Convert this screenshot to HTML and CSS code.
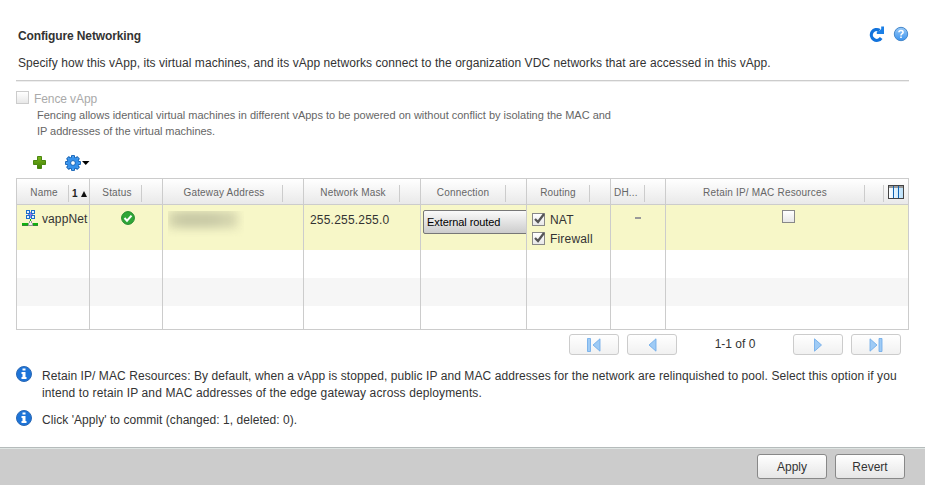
FILE: index.html
```html
<!DOCTYPE html>
<html lang="en">
<head>
<meta charset="utf-8">
<title>Configure Networking</title>
<link rel="stylesheet" href="styles.css">
</head>
<body>
<main class="page">
  <header class="title-bar">
    <h1>Configure Networking</h1>
    <div class="title-icons">
      <svg width="16" height="16" viewBox="0 0 16 16"><path d="M12.200 12A5.400 5.400 0 1 1 10.600 4.300" fill="none" stroke="#1273dc" stroke-width="3.200"/><path d="M15 .6V8H7.800V5.600L10.200 5 12.200 3V.6z" fill="#1b7fe6"/></svg>
      <svg width="16" height="16" viewBox="0 0 16 16"><defs><linearGradient id="help" x2="0" y2="1"><stop offset="0" stop-color="#9bcbf8"/><stop offset="1" stop-color="#3b93ee"/></linearGradient></defs><circle cx="8" cy="8" r="6.700" fill="url(#help)" stroke="#4587ca"/><path d="M5.900 6.300Q6 4.500 8 4.500T10.100 6.200Q10.100 7.200 8.900 7.900Q8 8.400 8 9.500M8 10.500V12" fill="none" stroke="#fff" stroke-width="1.600"/></svg>
    </div>
  </header>
  <p class="intro">Specify how this vApp, its virtual machines, and its vApp networks connect to the organization VDC networks that are accessed in this vApp.</p>
  <section class="fence">
    <div class="fence-option"><span class="box box-off"></span><span>Fence vApp</span></div>
    <p class="fence-help">Fencing allows identical virtual machines in different vApps to be powered on without conflict by isolating the MAC and<br><span class="tight">IP addresses of the virtual machines.</span></p>
  </section>
  <div class="toolbar">
    <svg class="add" width="14" height="14" viewBox="0 0 14 14"><defs><linearGradient id="add" x2="0" y2="1"><stop offset="0" stop-color="#7bb51c"/><stop offset="1" stop-color="#3f7f05"/></linearGradient></defs><path d="M4.500.5h4v4h4v4h-4v4h-4v-4h-4v-4h4z" fill="url(#add)" stroke="#4a8710" stroke-linejoin="round"/></svg>
    <svg width="25" height="16" viewBox="0 0 25 16">
      <g fill="#3d97ee" stroke="#1763b5" stroke-linejoin="round"><path d="M6.500.6h3v14.800h-3zM.6 6.500h14.800v3H.6z"/><path d="M6.500.6h3v14.800h-3zM.6 6.500h14.800v3H.6z" transform="rotate(45 8 8)"/></g>
      <circle cx="8" cy="8" r="6.300" fill="#1763b5"/>
      <g fill="#4ba2f2"><path d="M7 1.100h2v13.800H7zM1.100 7h13.800v2H1.100z"/><path d="M7 1.100h2v13.800H7zM1.100 7h13.800v2H1.100z" transform="rotate(45 8 8)"/><circle cx="8" cy="8" r="5.700" fill="#3591ec"/></g>
      <circle cx="8" cy="8" r="2.400" fill="#fff" stroke="#1763b5"/><path d="M17 6h7.500l-3.750 4z" fill="#000"/></svg>
  </div>
  <section class="table">
    <div class="row head">
      <div class="cell"><span class="label nudge">Name</span><span class="sort">1<i class="up"></i></span></div>
      <div class="cell"><span class="label nudge">Status</span><span class="grip"></span></div>
      <div class="cell"><span class="label nudge">Gateway Address</span><span class="grip"></span></div>
      <div class="cell"><span class="label nudge">Network Mask</span><span class="grip"></span></div>
      <div class="cell"><span class="label">Connection</span><span class="grip"></span></div>
      <div class="cell"><span class="label">Routing</span><span class="grip"></span></div>
      <div class="cell h-dh"><span class="label">DH...</span><span class="grip"></span></div>
      <div class="cell h-retain"><span class="label">Retain IP/ MAC Resources</span><span class="grip"></span><span class="columns"><svg width="16" height="14" viewBox="0 0 16 14" shape-rendering="crispEdges"><defs><linearGradient id="pane" x2="1"><stop offset="0" stop-color="#fff"/><stop offset="1" stop-color="#b9e0fa"/></linearGradient></defs><path d="M.5.5h15v13H.5z" fill="url(#pane)" stroke="#444"/><path d="M1 1h14v2H1z" fill="#999"/><path d="M5 1h1v12H5zM10 1h1v12h-1z" fill="#0e63b4"/></svg></span></div>
    </div>
    <div class="row selected">
      <div class="cell c-name"><svg width="16" height="16" viewBox="0 0 16 16" shape-rendering="crispEdges"><path d="M4 0h4v4H4zM9 0h4v4H9zM4 5h4v4H4zM9 5h4v4H9z" fill="#1c6fca"/><path d="M5 1h2v2H5zM10 1h2v2h-2zM5 6h2v2H5zM10 6h2v2h-2z" fill="#e4f1fd"/><path d="M8 2h1v6H8zM6 4h5v1H6z" fill="#8c7be8"/><path d="M8 9h1v2H8z" fill="#00b400"/><path d="M0 13h16v2H0z" fill="#10b010"/><path d="M0 15h16v1H0z" fill="#388438"/><path d="M7 11h3v2h1v3H6v-3h1z" fill="#999"/><path d="M8 11h1v2h1v2H7v-2h1z" fill="#eee"/></svg><span>vappNet</span></div>
      <div class="cell c-status"><svg width="14" height="14" viewBox="0 0 14 14"><circle cx="7" cy="7" r="6.400" fill="#2fa638" stroke="#218a2c"/><path d="M3.500 7l2.500 2.700L10.500 4.700" fill="none" stroke="#fff" stroke-width="2"/></svg></div>
      <div class="cell c-gateway"><div class="mask"><span class="smudge"></span></div></div>
      <div class="cell c-mask">255.255.255.0</div>
      <div class="cell c-conn"><div class="combo">External routed</div></div>
      <div class="cell c-routing">
        <div class="check"><span class="box"><svg width="14" height="13" viewBox="0 0 14 13"><path d="M3 6l3 3 6-8" fill="none" stroke="#555" stroke-width="2.300"/></svg></span><span>NAT</span></div>
        <div class="check"><span class="box"><svg width="14" height="13" viewBox="0 0 14 13"><path d="M3 6l3 3 6-8" fill="none" stroke="#555" stroke-width="2.300"/></svg></span><span>Firewall</span></div>
      </div>
      <div class="cell c-dhcp"><span class="dash"></span></div>
      <div class="cell c-retain"><span class="box"></span></div>
    </div>
    <div class="row blank"><i class="cell"></i><i class="cell"></i><i class="cell"></i><i class="cell"></i><i class="cell"></i><i class="cell"></i><i class="cell"></i><i class="cell"></i></div>
    <div class="row blank alt"><i class="cell"></i><i class="cell"></i><i class="cell"></i><i class="cell"></i><i class="cell"></i><i class="cell"></i><i class="cell"></i><i class="cell"></i></div>
    <div class="row last"><i class="cell"></i><i class="cell"></i><i class="cell"></i><i class="cell"></i><i class="cell"></i><i class="cell"></i><i class="cell"></i><i class="cell"></i></div>
  </section>
  <nav class="pager">
    <button class="page-btn"><svg width="14" height="14" viewBox="0 0 14 14"><path d="M.5.5h3v13h-3zM13 .8v12.400L6 7z"/></svg></button>
    <button class="page-btn"><svg width="14" height="14" viewBox="0 0 14 14"><path d="M11 .8v12.400L4 7z"/></svg></button>
    <span class="count">1-1 of 0</span>
    <button class="page-btn"><svg width="14" height="14" viewBox="0 0 14 14"><path d="M3.500.8v12.400L10.500 7z"/></svg></button>
    <button class="page-btn"><svg width="14" height="14" viewBox="0 0 14 14"><path d="M1 .8v12.400L8 7zM10 .5h3v13h-3z"/></svg></button>
  </nav>
  <section class="notes">
    <div class="note"><svg width="16" height="16" viewBox="0 0 16 16"><circle cx="8" cy="8" r="7.500" fill="#1d74d8" stroke="#2b68b4"/><path d="M6.500 2.500h3v2h-3zM5.500 6h4v5h1v2h-5v-2h1V8h-1z" fill="#fff"/></svg><p><span class="wide">Retain IP/ MAC Resources: By default, when a vApp is stopped, public IP and MAC addresses for the network are relinquished to pool. Select this option if you</span><br><span class="wider">intend to retain IP and MAC addresses of the edge gateway across deployments.</span></p></div>
    <div class="note"><svg width="16" height="16" viewBox="0 0 16 16"><circle cx="8" cy="8" r="7.500" fill="#1d74d8" stroke="#2b68b4"/><path d="M6.500 2.500h3v2h-3zM5.500 6h4v5h1v2h-5v-2h1V8h-1z" fill="#fff"/></svg><p><span>Click 'Apply' to commit (changed: 1, deleted: 0).</span></p></div>
  </section>
</main>
<footer class="actions"><button>Apply</button><button>Revert</button></footer>
</body>
</html>
```
FILE: styles.css
```css
* { box-sizing: border-box; }
body {
  margin: 0;
  width: 925px;
  height: 485px;
  display: flex;
  flex-direction: column;
  background: #fff;
  color: #333;
  font: 12px/17px "Liberation Sans", Arial, sans-serif;
}
h1, p { margin: 0; }
svg { display: block; flex: none; }
.page { height: 447px; padding: 26px 16px 0; flex: none; }
.title-bar { display: flex; justify-content: space-between; height: 26px; padding-left: 2px; }
h1 { font-size: 12px; line-height: 21px; letter-spacing: -.12px; }
.title-icons { display: flex; gap: 8px; }
.intro { height: 29px; padding: 3px 0 0 2px; border-bottom: 1px solid #ccc; box-shadow: 0 1px #eee; white-space: nowrap; letter-spacing: .06px; }
.fence { padding-top: 9px; height: 74px; white-space: nowrap; }
.fence-option { display: flex; gap: 5px; height: 17px; padding-top: 1px; color: #aaa; letter-spacing: -.1px; }
.fence-help { padding-left: 21px; font-size: 11px; line-height: 16px; color: #666; letter-spacing: -.01px; }
.tight { letter-spacing: -.06px; }
.box { width: 13px; height: 13px; flex: none; border: 1px solid #888; background: linear-gradient(#fff, #e8e8e8); }
.box svg { margin: -1px 0 0 -1px; overflow: visible; }
.box-off { border-color: #ccc; }
.toolbar { display: flex; gap: 18px; height: 23px; padding-left: 17px; }
.add { margin-top: 1px; }
.table { border: 1px solid #ccc; width: 893px; height: 152px; }
.row { display: grid; grid-template-columns: 73px 73px 141px 117px 106px 84px 55px 1fr; }
.cell { border-right: 1px solid #ccc; overflow: hidden; }
.cell:last-child { border-right: 0; }
.head { height: 26px; border-bottom: 1px solid #ccc; font-size: 10px; color: #666; letter-spacing: .18px; background: linear-gradient(#fff, #e9e9e9); }
.head .cell { display: flex; }
.label { flex: 1; padding-top: 5px; text-align: center; white-space: nowrap; }
.nudge { padding-left: 3px; }
.grip { width: 21px; height: 17px; margin-top: 6px; border-left: 1px solid #ccc; }
.h-dh .label { text-align: left; padding-left: 3px; }
.sort { width: 21px; height: 17px; margin-top: 6px; padding-left: 3px; border-left: 1px solid #ccc; color: #222; font-weight: bold; }
.up { display: inline-block; margin-left: 3px; border: 3px solid transparent; border-top: 0; border-bottom: 6px solid #111; }
.columns { width: 25px; height: 17px; margin-top: 6px; padding: 0 4px; border-left: 1px solid #ccc; }
.h-retain .grip { width: 19px; }
.selected { height: 45px; background: #f7f7c8; }
.c-name { display: flex; gap: 4px; padding: 5px 0 0 5px; white-space: nowrap; letter-spacing: .1px; }
.c-name span { padding-top: 1px; }
.c-status { padding: 6px 0 0 31px; }
.c-gateway { padding: 6px 0 0 5px; }
.mask { width: 76px; height: 26px; overflow: hidden; }
.smudge { display: block; width: 70px; height: 17px; background: linear-gradient(90deg, #d5d6ae, #c6c7a3 25%, #c9caa6 65%, #dadab2); filter: blur(5px); }
.c-mask { padding: 7px 0 0 6px; letter-spacing: .2px; }
.c-conn { padding: 5px 0 0 2px; }
.combo { width: 120px; height: 24px; padding-left: 3px; font-size: 11px; line-height: 23px; letter-spacing: -.08px; border: 1px solid #777; border-radius: 2px; background: linear-gradient(#fafafa, #ccc); color: #000; }
.c-routing { padding: 8px 0 0 5px; }
.check { display: flex; gap: 5px; height: 19px; line-height: 15px; letter-spacing: .18px; }
.c-dhcp { padding: 12px 0 0 24px; }
.dash { display: block; width: 6px; height: 2px; background: #999; }
.c-retain { padding: 5px 0 0 116px; }
.c-retain .box { display: block; }
.blank { height: 28px; }
.alt { background: #f6f6f6; }
.last { height: 23px; }
.pager { display: flex; justify-content: flex-end; gap: 8px; padding: 4px 8px 0 0; height: 36px; }
.page-btn { width: 50px; height: 21px; padding: 2px 17px; border: 1px solid #ccc; border-radius: 3px; background: linear-gradient(#fff, #f1f1f1); }
.page-btn path { fill: #9fcbf5; stroke: #69a8e8; stroke-width: .8; }
.count { width: 100px; padding-top: 2px; text-align: center; }
.note { display: flex; gap: 10px; height: 44px; white-space: nowrap; }
.note p { padding-top: 2px; letter-spacing: .05px; }
.wide { letter-spacing: .075px; }
.wider { letter-spacing: .12px; }
.actions { flex: 1; display: flex; justify-content: flex-end; gap: 8px; padding: 6px 20px 0 0; background: #ccc; border-top: 1px solid #b5bbbb; box-shadow: inset 0 1px #dfe5e3; }
.actions button { width: 70px; height: 25px; padding: 0; border: 1px solid #888; border-radius: 3px; background: linear-gradient(#fff, #e6e6e6); color: #333; font: 12px "Liberation Sans", Arial, sans-serif; }
```
